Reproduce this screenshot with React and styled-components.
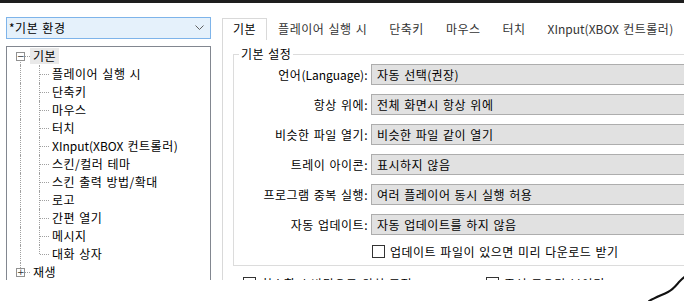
import React from 'react'
import styled, { createGlobalStyle, css } from 'styled-components'

const GlobalStyle = createGlobalStyle`
    html, body {
        margin: 0;
        padding: 0;
        background: #ffffff;
    }
    body {
        font-family: "Noto Sans CJK KR", "Noto Sans", sans-serif;
        font-size: 12px;
        letter-spacing: 0.5px;   // hangul in the original font runs a bit wider
        word-spacing: 1px;
        color: #000;
    }
`

// latin runs keep their natural spacing, only hangul gets the extra tracking
const Latin = styled.span`
    letter-spacing: 0;
`

function T({ children }) {
    const parts = String(children).split(/([A-Za-z()]+)/)
    return parts.map((p, i) => (i % 2 ? <Latin key={i}>{p}</Latin> : p))
}

const treeChildren = [
    '플레이어 실행 시',
    '단축키',
    '마우스',
    '터치',
    'XInput(XBOX 컨트롤러)',
    '스킨/컬러 테마',
    '스킨 출력 방법/확대',
    '로고',
    '간편 열기',
    '메시지',
    '대화 상자',
]

const tabs = ['기본', '플레이어 실행 시', '단축키', '마우스', '터치', 'XInput(XBOX 컨트롤러)']

const settings = [
    ['언어(Language):', '자동 선택(권장)'],
    ['항상 위에:', '전체 화면시 항상 위에'],
    ['비슷한 파일 열기:', '비슷한 파일 같이 열기'],
    ['트레이 아이콘:', '표시하지 않음'],
    ['프로그램 중복 실행:', '여러 플레이어 동시 실행 허용'],
    ['자동 업데이트:', '자동 업데이트를 하지 않음'],
]

function App() {
    return (
        <Page>
            <GlobalStyle />
            <TopEdge />
            <Window>
                <LeftColumn>
                    <Combo>
                        <span>*기본 환경</span>
                        <svg width="9" height="6" viewBox="0 0 9 6">
                            <polyline points="0.5,0.5 4.5,4.5 8.5,0.5" fill="none" stroke="#606060" strokeWidth="1" />
                        </svg>
                    </Combo>
                    <Tree>
                        <TreeRow>
                            <Guide down right><ExpandBox>−</ExpandBox></Guide>
                            <TreeLabel selected>기본</TreeLabel>
                        </TreeRow>
                        {treeChildren.map((name, i) => (
                            <TreeRow key={name}>
                                <Guide up down />
                                <Guide up down={i < treeChildren.length - 1} right />
                                <TreeLabel><T>{name}</T></TreeLabel>
                            </TreeRow>
                        ))}
                        <TreeRow>
                            <Guide up right><ExpandBox>+</ExpandBox></Guide>
                            <TreeLabel>재생</TreeLabel>
                        </TreeRow>
                    </Tree>
                </LeftColumn>

                <RightColumn>
                    <TabStrip>
                        {tabs.map((t, i) => (
                            <Tab key={t} active={i === 0}><T>{t}</T></Tab>
                        ))}
                    </TabStrip>
                    <TabPanel>
                        <GroupBox>
                            <legend>기본 설정</legend>
                            <FormGrid>
                                {settings.map(([label, value]) => (
                                    <React.Fragment key={label}>
                                        <FieldLabel><T>{label}</T></FieldLabel>
                                        <Field><T>{value}</T></Field>
                                    </React.Fragment>
                                ))}
                                <CheckRow inGrid>
                                    <CheckBox />
                                    <span>업데이트 파일이 있으면 미리 다운로드 받기</span>
                                </CheckRow>
                            </FormGrid>
                        </GroupBox>
                        <OptionRow>
                            <CheckRow wide>
                                <CheckBox />
                                <span>최소화시 바탕으로 위치 고정</span>
                            </CheckRow>
                            <CheckRow>
                                <CheckBox />
                                <span>주석 도우미 보이기</span>
                            </CheckRow>
                        </OptionRow>
                    </TabPanel>
                </RightColumn>
            </Window>

            <Scribble width="40" height="30" viewBox="0 0 40 30">
                <path d="M3 29 C 10 25, 16 23, 22 20 S 31 12, 34 9 S 38 5, 40 4" fill="none" stroke="#111" strokeWidth="2" strokeLinecap="round" />
            </Scribble>
        </Page>
    )
}

export default App

const Page = styled.div`
    position: relative;
    width: 684px;
    height: 301px;
    overflow: hidden;
    background: #fff;
`

const TopEdge = styled.div`
    height: 3px;
    background: #1e1e1e;
`

const Window = styled.div`
    display: flex;
    height: 277px;
    overflow: hidden;
`

const LeftColumn = styled.div`
    flex: none;
    width: 205px;
    padding: 14px 0 0 6px;
    display: flex;
    flex-direction: column;
    gap: 7px;
`

const Combo = styled.div`
    box-sizing: border-box;
    height: 22px;
    display: flex;
    align-items: center;
    justify-content: space-between;
    padding: 0 6px 0 2px;
    border: 1px solid #7eb4ea;
    background: #e5f1fb;
    line-height: 20px;
`

const Tree = styled.div`
    box-sizing: border-box;
    flex: 1;
    border: 1px solid #828790;
    border-bottom: none;
    padding: 0 0 0 4px;
    background: #fff;
`

const TreeRow = styled.div`
    display: flex;
    height: 18px;
    align-items: stretch;
`

const dots = '1px dotted #a0a0a0'

const Guide = styled.div`
    position: relative;
    flex: none;
    width: 19px;
    height: 18px;

    &::before {
        content: '';
        position: absolute;
        left: 9px;
        top: ${p => (p.up ? '0' : '9px')};
        bottom: ${p => (p.down ? '0' : '9px')};
        border-left: ${p => (p.up || p.down ? dots : 'none')};
    }

    ${p => p.right && css`
        &::after {
            content: '';
            position: absolute;
            left: 10px;
            right: 0;
            top: 9px;
            border-top: ${dots};
        }
    `}
`

const ExpandBox = styled.div`
    position: absolute;
    z-index: 1;
    left: 5px;
    top: 5px;
    box-sizing: border-box;
    width: 9px;
    height: 9px;
    border: 1px solid #919191;
    background: #fff;
    color: #333;
    font-family: "DejaVu Sans", sans-serif;
    font-size: 9px;
    letter-spacing: 0;
    line-height: 6px;
    text-align: center;
`

const TreeLabel = styled.span`
    align-self: center;
    padding: 0 3px;
    line-height: 16px;
    white-space: nowrap;
    background: ${p => (p.selected ? '#e9e9e9' : 'transparent')};
`

const RightColumn = styled.div`
    flex: none;
    width: 560px;
    margin-left: 11px;
    padding-top: 15px;
    display: flex;
    flex-direction: column;
`

const TabStrip = styled.div`
    display: flex;
    border-bottom: 1px solid #d9d9d9;
`

const Tab = styled.div`
    box-sizing: border-box;
    height: 22px;
    margin-bottom: -1px;
    padding: 0 10px;
    line-height: 19px;
    white-space: nowrap;
    color: ${p => (p.active ? '#000' : '#333')};
    background: #fff;
    border: 1px solid ${p => (p.active ? '#d9d9d9' : 'transparent')};
    border-bottom: none;
`

const TabPanel = styled.div`
    flex: 1;
    border-left: 1px solid #d9d9d9;
    padding: 7px 0 0 10px;
`

const GroupBox = styled.fieldset`
    margin: 0;
    padding: 0 0 6px 0;
    border: 1px solid #dcdcdc;
    border-right: none;

    legend {
        margin-left: 5px;
        padding: 0 2px;
        line-height: 14px;
    }
`

const FormGrid = styled.div`
    display: grid;
    grid-template-columns: 134px 1fr;
    column-gap: 3px;
    row-gap: 9px;
    margin-top: 3px;
`

const FieldLabel = styled.div`
    text-align: right;
    line-height: 21px;
    white-space: nowrap;
`

const Field = styled.div`
    box-sizing: border-box;
    height: 21px;
    padding-left: 5px;
    border: 1px solid #adadad;
    border-right: none;
    background: #e1e1e1;
    line-height: 19px;
    white-space: nowrap;
`

const CheckRow = styled.label`
    display: flex;
    align-items: center;
    gap: 5px;
    height: 15px;
    white-space: nowrap;
    ${p => p.inGrid && css`
        grid-column: 2;
        padding-left: 1px;
    `}
    ${p => p.wide && css`
        width: 243px;
    `}
`

const CheckBox = styled.span`
    box-sizing: border-box;
    flex: none;
    width: 13px;
    height: 13px;
    border: 1px solid #333;
    background: #fff;
`

const OptionRow = styled.div`
    display: flex;
    margin-top: 10px;
    padding-left: 10px;
`

const Scribble = styled.svg`
    position: absolute;
    left: 646px;
    top: 272px;
`
